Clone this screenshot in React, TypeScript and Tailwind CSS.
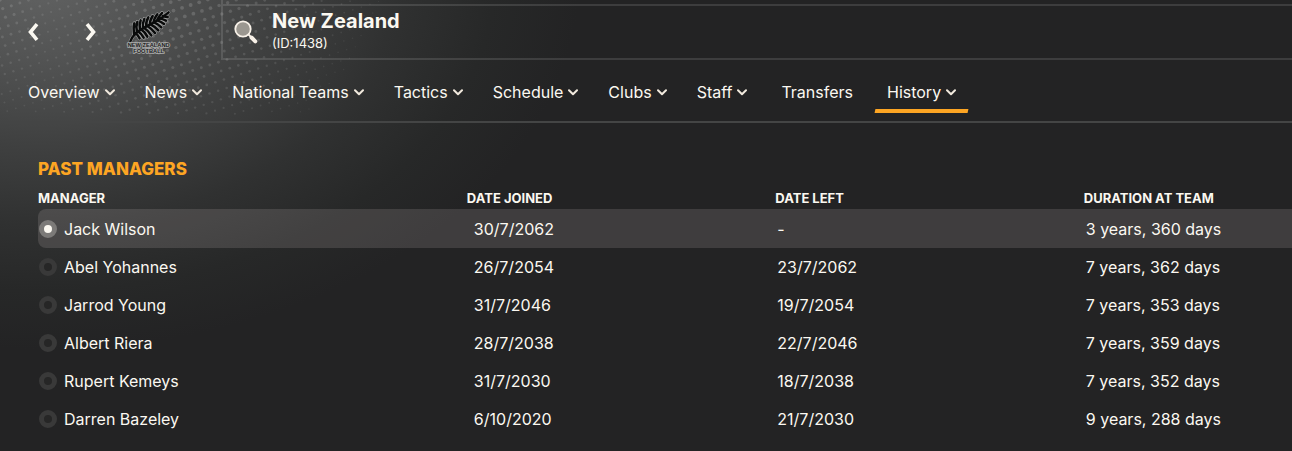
import { useState } from "react";

type Manager = { name: string; joined: string; left: string; duration: string };

const NAV_ITEMS = [
  { label: "Overview", menu: true },
  { label: "News", menu: true },
  { label: "National Teams", menu: true },
  { label: "Tactics", menu: true },
  { label: "Schedule", menu: true },
  { label: "Clubs", menu: true },
  { label: "Staff", menu: true },
  { label: "Transfers", menu: false },
  { label: "History", menu: true }
];

const MANAGERS: Manager[] = [
  { name: "Jack Wilson", joined: "30/7/2062", left: "-", duration: "3 years, 360 days" },
  { name: "Abel Yohannes", joined: "26/7/2054", left: "23/7/2062", duration: "7 years, 362 days" },
  { name: "Jarrod Young", joined: "31/7/2046", left: "19/7/2054", duration: "7 years, 353 days" },
  { name: "Albert Riera", joined: "28/7/2038", left: "22/7/2046", duration: "7 years, 359 days" },
  { name: "Rupert Kemeys", joined: "31/7/2030", left: "18/7/2038", duration: "7 years, 352 days" },
  { name: "Darren Bazeley", joined: "6/10/2020", left: "21/7/2030", duration: "9 years, 288 days" }
];

// Each leaflet runs from the spine of the fern to its own tip.
const FERN_LEAFLETS = [
  "M28 80Q24 60 28 46",
  "M36 71Q32 56 37 42",
  "M45 65Q42 50 47 37",
  "M54 60Q52 46 58 33",
  "M64 55Q62 42 70 28",
  "M75 49Q74 38 83 24",
  "M86 43Q86 34 97 19",
  "M97 36Q99 29 111 15",
  "M32 76Q38 80 44 91",
  "M39 70Q48 76 56 89",
  "M48 64Q60 72 67 86",
  "M57 59Q70 68 79 82",
  "M67 54Q80 62 90 75",
  "M77 49Q90 56 100 67",
  "M87 43Q100 48 109 58",
  "M97 37Q109 41 117 48",
  "M106 31Q116 34 123 38",
  "M114 24Q122 27 128 27"
];

export default function App() {
  const [activeTab, setActiveTab] = useState("History");
  const [selected, setSelected] = useState("Jack Wilson");

  return (
    <div className="relative isolate min-h-screen overflow-hidden bg-[#232324] font-['Inter',sans-serif] text-[#fbf8f1]">
      <div className="absolute inset-0 -z-10 bg-[radial-gradient(ellipse_540px_370px_at_40px_-20px,#626363_0%,#525353_22%,#3f4040_45%,#303131_66%,#272828_84%,transparent_100%)]" />
      <HalftoneDots />

      <header className="border-b-2 border-[#444545]">
        <div className="flex h-[60px]">
          <div className="flex w-[221px] shrink-0 items-center pl-[23px] pt-1">
            <button type="button" aria-label="Back" className="flex h-8 w-5 items-center justify-center">
              <ArrowIcon className="rotate-180" />
            </button>
            <button type="button" aria-label="Forward" className="ml-[38px] flex h-8 w-5 items-center justify-center">
              <ArrowIcon />
            </button>
            <FernCrest />
          </div>
          <div className="flex flex-1 border-b-2 border-l-2 border-white/12 pt-1">
            <div className="flex flex-1 items-center gap-[14px] border-t-2 border-white/12 pl-[11px]">
              <button type="button" aria-label="Search">
                <SearchIcon />
              </button>
              <div className="pb-[2px]">
                <h1 className="text-xl font-bold leading-6">New Zealand</h1>
                <p className="text-[13px] leading-5">(ID:1438)</p>
              </div>
            </div>
          </div>
        </div>

        <nav className="flex h-[61px] items-start gap-[6px] pl-4 pt-[13px]">
          {NAV_ITEMS.map((item) => (
            <button
              key={item.label}
              type="button"
              onClick={() => setActiveTab(item.label)}
              className={`relative flex h-10 items-center gap-[5px] whitespace-nowrap pb-[2px] text-base ${item.menu ? "px-3" : "px-4"}`}
            >
              {item.label}
              {item.menu && <CaretIcon />}
              {item.label === activeTab && (
                <span className="absolute inset-x-0 bottom-0 h-1 -skew-x-12 bg-[#fda523]" />
              )}
            </button>
          ))}
        </nav>
      </header>

      <main className="pl-[38px] pt-[34px]">
        <h2 className="text-[17px] font-extrabold leading-6 text-[#fda523]">PAST MANAGERS</h2>
        <table className="mt-[5px] w-full table-fixed border-separate border-spacing-0 text-left text-base">
          <thead>
            <tr className="h-[23px] text-[13px] leading-5">
              <th className="w-[34.2%] p-0 font-bold">MANAGER</th>
              <th className="w-[24.6%] p-0 font-bold">DATE JOINED</th>
              <th className="w-[24.6%] p-0 font-bold">DATE LEFT</th>
              <th className="p-0 font-bold">DURATION AT TEAM</th>
            </tr>
          </thead>
          <tbody>
            {MANAGERS.map((manager) => (
              <ManagerRow
                key={manager.name}
                manager={manager}
                selected={manager.name === selected}
                onSelect={() => setSelected(manager.name)}
              />
            ))}
          </tbody>
        </table>
      </main>
    </div>
  );
}

function ManagerRow(props: { manager: Manager; selected: boolean; onSelect: () => void }) {
  const { manager, selected, onSelect } = props;
  return (
    <tr className={selected ? "h-[39px] [&>td]:bg-[#fff0f0]/13" : "h-[38px]"}>
      <td className="rounded-l-lg p-0">
        <label className="flex items-center gap-[7px]">
          <input
            type="radio"
            name="manager"
            checked={selected}
            onChange={onSelect}
            className="ml-px size-[18px] appearance-none rounded-full border-[5px] border-[#393939] bg-[#262626] checked:border-[#7c7a78] checked:bg-[#fbf8f1]"
          />
          {manager.name}
        </label>
      </td>
      <td className="p-0 pl-[7px]">{manager.joined}</td>
      <td className="p-0 pl-[2px]">{manager.left}</td>
      <td className="p-0 pl-[2px]">{manager.duration}</td>
    </tr>
  );
}

/** Slanted grid of dots, strongest in a band right of the crest and in the top left corner. */
function HalftoneDots() {
  const dots = [];
  const angle = -0.31;
  for (let row = -4; row < 32; row++) {
    for (let col = -6; col < 46; col++) {
      const x = col * 9 * Math.cos(angle) - row * 9 * Math.sin(angle);
      const y = col * 9 * Math.sin(angle) + row * 9 * Math.cos(angle);
      const band = 1 - Math.hypot((x + y * 0.3 - 190) / 190, y / 190);
      const corner = 0.8 - Math.hypot(x / 100, y / 180);
      const strength = Math.max(band, corner);
      if (x > -2 && y > -2 && y < 114 && strength > 0) {
        dots.push(<circle key={`${row}:${col}`} cx={x} cy={y} r={0.7 + strength * 1.3} opacity={0.06 + strength * 0.1} />);
      }
    }
  }
  return (
    <svg className="absolute left-0 top-0 -z-10" width="400" height="120" fill="#fff" aria-hidden="true">
      {dots}
    </svg>
  );
}

function ArrowIcon(props: { className?: string }) {
  return (
    <svg className={props.className} width="12" height="18" viewBox="0 0 12 18" fill="none" stroke="#fbf8f1" strokeWidth="3.6" aria-hidden="true">
      <path d="M2 1.200 8.500 9 2 16.800" />
    </svg>
  );
}

function CaretIcon() {
  return (
    <svg width="10" height="7" viewBox="0 0 10 7" fill="none" stroke="#f1e9dd" strokeWidth="2" strokeLinecap="round" strokeLinejoin="round" aria-hidden="true">
      <path d="M1 1.300 5 5.300 9 1.300" />
    </svg>
  );
}

function SearchIcon() {
  return (
    <svg width="24" height="24" viewBox="0 0 24 24" fill="none" aria-hidden="true">
      <circle cx="9" cy="9" r="7.700" fill="#9b9790" stroke="#f8f1e8" strokeWidth="1.800" />
      <path d="M14 14 17 17" stroke="#f8f1e8" strokeWidth="1.800" />
      <path d="M17.500 17.500 21.300 21.300" stroke="#f8f1e8" strokeWidth="4" strokeLinecap="round" />
    </svg>
  );
}

function FernCrest() {
  const leaflets = FERN_LEAFLETS.join("");
  const spine = "M16 100Q20 88 32 76Q50 62 80 47Q110 32 131 13";
  return (
    <svg className="ml-6" width="48" height="48" viewBox="0 0 144 144" role="img" aria-label="New Zealand Football">
      <g fill="none" strokeLinecap="round">
        <path d={leaflets} stroke="#a4a5a5" strokeWidth="11" />
        <path d={spine} stroke="#a4a5a5" strokeWidth="10" />
        <path d={leaflets} stroke="#0a0b0b" strokeWidth="7.500" />
        <path d={spine} stroke="#0a0b0b" strokeWidth="7" />
      </g>
      <g fill="#1a1a1a" stroke="#a9aaaa" strokeWidth="5" paintOrder="stroke" fontFamily="Liberation Sans" fontWeight="700" fontSize="17" textAnchor="middle">
        <text x="71" y="118">NEW ZEALAND</text>
        <text x="71" y="136">FOOTBALL</text>
      </g>
    </svg>
  );
}
